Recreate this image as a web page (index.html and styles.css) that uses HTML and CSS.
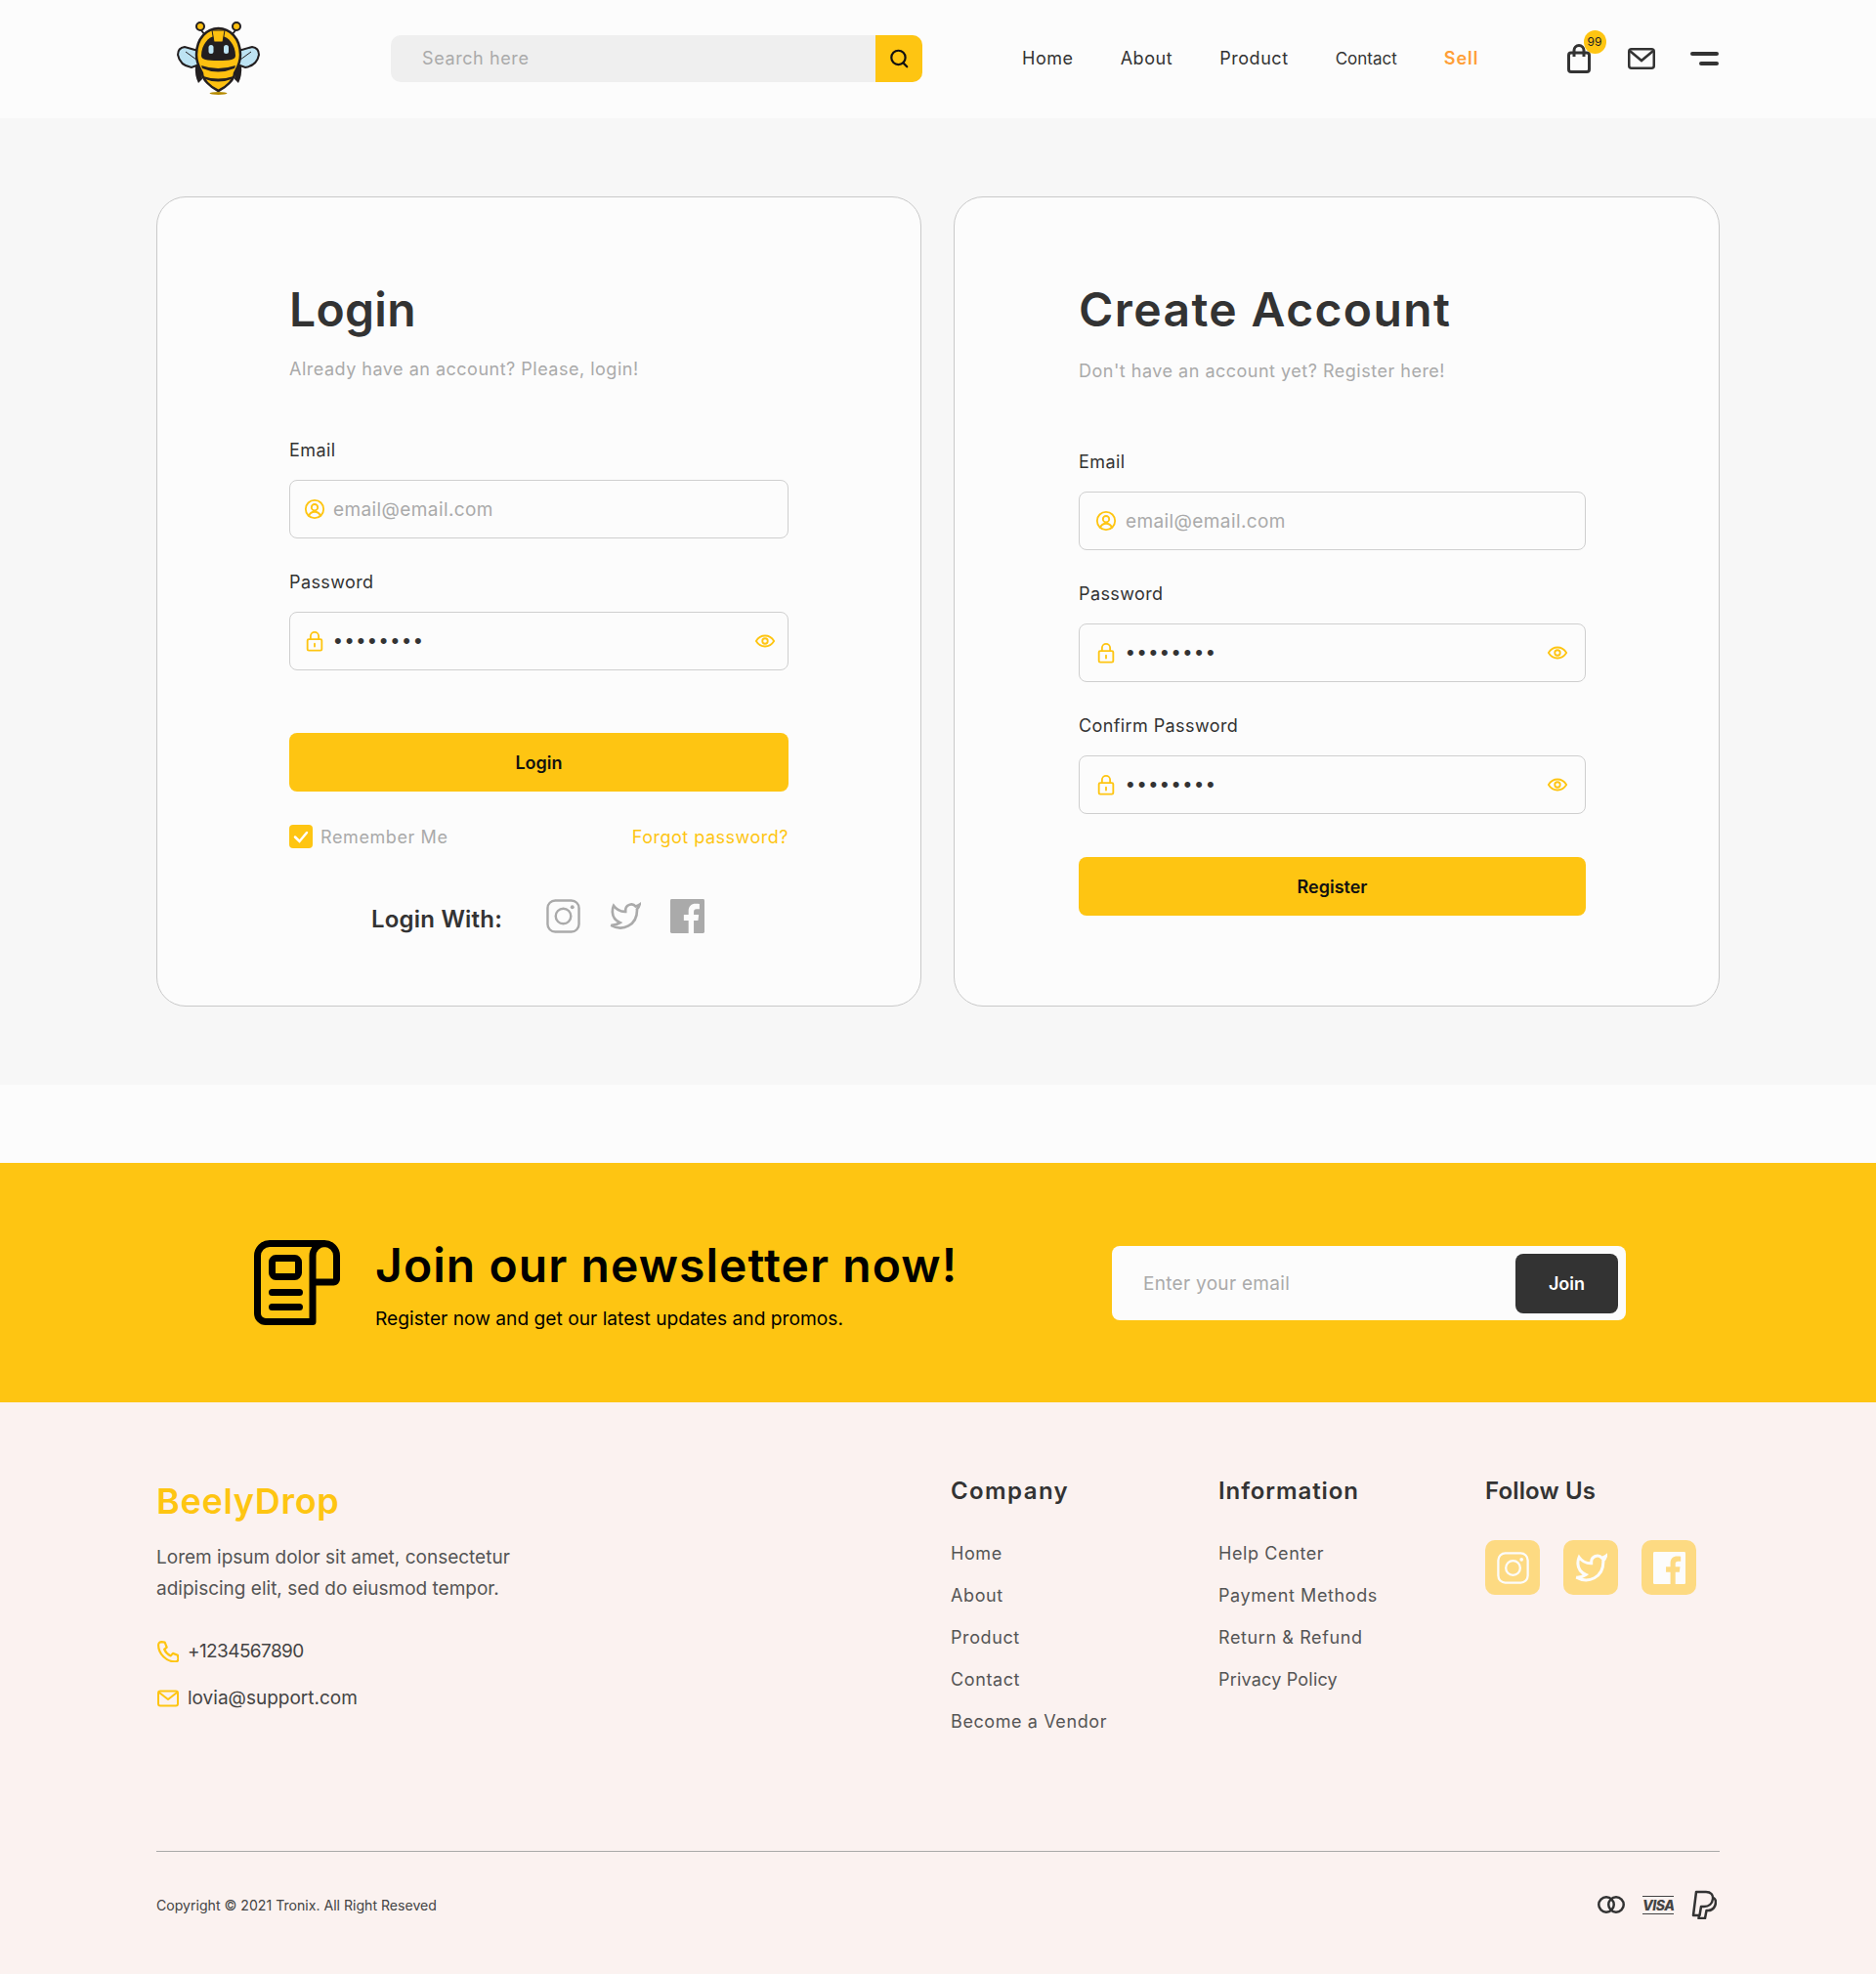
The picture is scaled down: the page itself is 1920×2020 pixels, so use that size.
FILE: index.html

```html
<!DOCTYPE html>
<html lang="en">
<head>
    <meta charset="UTF-8">
    <meta name="viewport" content="width=device-width, initial-scale=1.0">
    <title>BeelyDrop - Login</title>
    <link rel="stylesheet" href="styles.css">
</head>
<body>
    <header class="topbar">
        <svg class="logo" viewBox="0 0 110 100" aria-label="BeelyDrop">
            <path d="M44 30L36 20M63 30L71 20" stroke="#231f20" stroke-width="2" fill="none"/>
            <circle cx="35" cy="16" r="4" fill="#fdc010" stroke="#231f20" stroke-width="2"/>
            <circle cx="72" cy="16" r="4" fill="#fdc010" stroke="#231f20" stroke-width="2"/>
            <path d="M33 41L19 37Q12 38 12 45Q14 56 26 58L34 55Z" fill="#bde3f3" stroke="#231f20" stroke-width="2"/>
            <path d="M74 41L88 37Q95 38 95 45Q93 56 81 58L73 55Z" fill="#bde3f3" stroke="#231f20" stroke-width="2"/>
            <path d="M20 42L31 50M87 42L76 50" stroke="#231f20" stroke-width="1" fill="none"/>
            <path d="M30 56Q29 66 33 74L37 70L36 56ZM77 56Q78 66 74 74L70 70L71 56Z" fill="#231f20"/>
            <path d="M31 45C31 28 42 18 53.5 18C65 18 76 28 76 45C76 54 72 60 70 64C70 70 62 78 53.5 82C45 78 37 70 37 64C35 60 31 54 31 45Z" fill="#fdc010" stroke="#231f20" stroke-width="2.5"/>
            <path d="M36 46C36 34 44 27 49 26L58 26C63 27 71 34 71 46C71 50 66 51 53.5 51C41 51 36 50 36 46Z" fill="#231f20"/>
            <path d="M47 20L60 20L58 32L49 32Z" fill="#fdc010" stroke="#231f20" stroke-width="1"/>
            <rect x="43.5" y="35" width="5" height="9" rx="2.5" fill="#bde3f3"/>
            <rect x="59" y="35" width="5" height="9" rx="2.5" fill="#bde3f3"/>
            <path d="M36 56Q53 62 71 56L70 59Q53 66 37 59ZM38 67Q53 72 69 67L67 70Q53 75 40 70Z" fill="#231f20"/>
            <ellipse cx="53.5" cy="84.5" rx="9" ry="1.5" fill="#b58a00"/>
        </svg>

        <form class="search">
            <input type="text" class="search-input" placeholder="Search here">
            <button type="button" class="search-btn" aria-label="Search">
                <svg class="ico-20" viewBox="0 0 20 20"><circle cx="9.5" cy="9" r="6.5"/><path d="M14 14l3.5 3.5"/></svg>
            </button>
        </form>

        <nav class="nav">
            <a href="#">Home</a>
            <a href="#">About</a>
            <a href="#">Product</a>
            <a href="#" class="nav-small">Contact</a>
            <a href="#" class="nav-sell">Sell</a>
        </nav>

        <div class="top-icons">
            <span class="bag">
                <svg class="bag-ico" viewBox="0 0 24 30"><rect x="1.5" y="9" width="21" height="19.5" rx="2.5"/><path d="M7 13V6.500a5 5 0 0 1 10 0V13"/></svg>
                <span class="badge">99</span>
            </span>
            <svg class="mail-ico" viewBox="0 0 28 22"><rect x="1.250" y="1.250" width="25.500" height="19.500" rx="2.500"/><path d="M2 3l12 10L26 3"/></svg>
            <span class="menu-ico"><i></i><i></i></span>
        </div>
    </header>

    <main class="auth">
        <section class="card card-login">
            <h1>Login</h1>
            <p class="sub">Already have an account? Please, login!</p>

            <div class="field">
                <label>Email</label>
                <div class="input-wrap">
                    <svg class="ico" viewBox="0 0 24 24"><circle cx="12" cy="12" r="10"/><circle cx="12" cy="10" r="3.500"/><path d="M5.500 19.500c1-3 3.500-4.500 6.500-4.500s5.500 1.500 6.500 4.500"/></svg>
                    <input type="text" placeholder="email@email.com">
                </div>
            </div>
            <div class="field">
                <label>Password</label>
                <div class="input-wrap">
                    <svg class="ico" viewBox="0 0 24 24"><rect x="4" y="10" width="16" height="12.500" rx="1.500"/><path d="M7.500 10V6.500a4.500 4.500 0 0 1 9 0V10M12 15v3"/></svg>
                    <input type="password" value="12345678">
                    <svg class="ico eye" viewBox="0 0 24 24"><path d="M2 12c2.500-4 5.800-6 10-6s7.500 2 10 6c-2.500 4-5.800 6-10 6s-7.500-2-10-6z"/><circle cx="12" cy="12" r="3"/></svg>
                </div>
            </div>

            <button class="main-btn login-btn">Login</button>

            <div class="remember">
                <label class="check">
                    <span class="box"><svg viewBox="0 0 24 24"><path d="M6 12.500l4.500 4.500L18 8"/></svg></span>
                    Remember Me
                </label>
                <a href="#" class="forgot">Forgot password?</a>
            </div>

            <div class="login-with">
                <strong>Login With:</strong>
                <svg class="soc soc-line" viewBox="0 0 36 36"><rect x="1.500" y="1.500" width="33" height="33" rx="8"/><circle cx="18" cy="18" r="8"/><circle class="dot" cx="27.500" cy="8.500" r="2"/></svg>
                <svg class="soc soc-line soc-tw" viewBox="0 0 24 24"><path d="M23 3a10.900 10.900 0 0 1-3 1.530 4.480 4.480 0 0 0-7.860 3v1A10.660 10.660 0 0 1 3 4s-4 9 5 13a11.640 11.640 0 0 1-7 2c9 5 20 0 20-11.500a4.500 4.500 0 0 0-.08-.83A7.720 7.720 0 0 0 23 3z"/></svg>
                <svg class="soc soc-fb" viewBox="0 0 24 24"><rect class="fb-bg" width="24" height="24" rx="1"/><path class="fb-f" d="M16.500 24v-9h3l.5-4h-3.500V9c0-1.200.500-2 2-2H20.500V3.500c-.7-.1-1.700-.2-2.700-.2-3 0-5 1.800-5 5V11H9.500v4h3.300v9z"/></svg>
            </div>
        </section>

        <section class="card card-register">
            <h1>Create Account</h1>
            <p class="sub">Don't have an account yet? Register here!</p>

            <div class="field">
                <label>Email</label>
                <div class="input-wrap">
                    <svg class="ico" viewBox="0 0 24 24"><circle cx="12" cy="12" r="10"/><circle cx="12" cy="10" r="3.500"/><path d="M5.500 19.500c1-3 3.500-4.500 6.500-4.500s5.500 1.500 6.500 4.500"/></svg>
                    <input type="text" placeholder="email@email.com">
                </div>
            </div>
            <div class="field">
                <label>Password</label>
                <div class="input-wrap">
                    <svg class="ico" viewBox="0 0 24 24"><rect x="4" y="10" width="16" height="12.500" rx="1.500"/><path d="M7.500 10V6.500a4.500 4.500 0 0 1 9 0V10M12 15v3"/></svg>
                    <input type="password" value="12345678">
                    <svg class="ico eye" viewBox="0 0 24 24"><path d="M2 12c2.500-4 5.800-6 10-6s7.500 2 10 6c-2.500 4-5.800 6-10 6s-7.500-2-10-6z"/><circle cx="12" cy="12" r="3"/></svg>
                </div>
            </div>
            <div class="field">
                <label>Confirm Password</label>
                <div class="input-wrap">
                    <svg class="ico" viewBox="0 0 24 24"><rect x="4" y="10" width="16" height="12.500" rx="1.500"/><path d="M7.500 10V6.500a4.500 4.500 0 0 1 9 0V10M12 15v3"/></svg>
                    <input type="password" value="12345678">
                    <svg class="ico eye" viewBox="0 0 24 24"><path d="M2 12c2.500-4 5.800-6 10-6s7.500 2 10 6c-2.500 4-5.800 6-10 6s-7.500-2-10-6z"/><circle cx="12" cy="12" r="3"/></svg>
                </div>
            </div>

            <button class="main-btn register-btn">Register</button>
        </section>
    </main>

    <div class="gap-strip"></div>

    <section class="newsletter">
        <svg class="news-ico" viewBox="0 0 88 87"><path d="M60 83.500H12A8.500 8.500 0 0 1 3.500 75V16A12.500 12.500 0 0 1 16 3.500H72A12.500 12.500 0 0 1 84.500 16V40A3 3 0 0 1 81.500 43H60M60 83.500V16A12.500 12.500 0 0 1 72 3.500"/><rect x="18.500" y="18.500" width="27" height="19" rx="4"/><path d="M18.500 53.500H46.500M18.500 68.500H46.500"/></svg>
        <div class="news-text">
            <h2>Join our newsletter now!</h2>
            <p>Register now and get our latest updates and promos.</p>
        </div>
        <form class="news-form">
            <input type="text" placeholder="Enter your email">
            <button type="button">Join</button>
        </form>
    </section>

    <footer class="footer">
        <div class="footer-top">
            <div class="brand">
                <h3 class="brand-name">BeelyDrop</h3>
                <p>Lorem ipsum dolor sit amet, consectetur<br>adipiscing elit, sed do eiusmod tempor.</p>
                <div class="contact contact-phone">
                    <svg class="ico" viewBox="2 1.500 20 20"><path d="M6 2.500l3 .5 1.800 4.500-2.300 2c1.200 2.800 3.200 4.800 6 6l2-2.300 4.500 1.800.5 3c0 1.800-1.200 3-3 3C10.500 21 3 13.500 3 5.500c0-1.800 1.200-3 3-3z"/></svg>
                    <span class="phone-num">+1234567890</span>
                </div>
                <div class="contact">
                    <svg class="ico" viewBox="1 1 22 22"><rect x="2" y="4.500" width="20" height="15" rx="2"/><path d="M3 6l9 7 9-7"/></svg>
                    lovia@support.com
                </div>
            </div>
            <div class="col col-company">
                <h4>Company</h4>
                <a href="#">Home</a>
                <a href="#">About</a>
                <a href="#">Product</a>
                <a href="#">Contact</a>
                <a href="#">Become a Vendor</a>
            </div>
            <div class="col col-info">
                <h4>Information</h4>
                <a href="#">Help Center</a>
                <a href="#">Payment Methods</a>
                <a href="#">Return &amp; Refund</a>
                <a href="#" class="link-tight">Privacy Policy</a>
            </div>
            <div class="col col-follow">
                <h4>Follow Us</h4>
                <div class="follow">
                    <span class="tile"><svg class="tile-line" viewBox="0 0 36 36"><rect x="1.500" y="1.500" width="33" height="33" rx="8"/><circle cx="18" cy="18" r="8"/><circle class="dot" cx="27.500" cy="8.500" r="2"/></svg></span>
                    <span class="tile"><svg class="tile-line tile-tw" viewBox="0 0 24 24"><path d="M23 3a10.900 10.900 0 0 1-3 1.530 4.480 4.480 0 0 0-7.860 3v1A10.660 10.660 0 0 1 3 4s-4 9 5 13a11.640 11.640 0 0 1-7 2c9 5 20 0 20-11.500a4.500 4.500 0 0 0-.08-.83A7.720 7.720 0 0 0 23 3z"/></svg></span>
                    <span class="tile"><svg class="tile-fb" viewBox="0 0 24 24"><rect class="fb-bg" width="24" height="24" rx="1"/><path class="fb-f" d="M16.500 24v-9h3l.5-4h-3.500V9c0-1.200.500-2 2-2H20.500V3.500c-.7-.1-1.700-.2-2.700-.2-3 0-5 1.800-5 5V11H9.500v4h3.300v9z"/></svg></span>
                </div>
            </div>
        </div>
        <div class="footer-bottom">
            <small>Copyright © 2021 Tronix. All Right Reseved</small>
            <div class="pay">
                <svg class="pay-mc" viewBox="0 0 28 18"><circle cx="9" cy="9" r="7.750"/><circle cx="19" cy="9" r="7.750"/></svg>
                <span class="pay-visa">VISA</span>
                <svg class="pay-pp" viewBox="0 0 26 30"><path d="M5 2H15C20 2 22.500 5 22 9C21.500 14 18 17 13 17H10L8.500 26H2ZM8 26L7.500 29H14L15.500 21H17.500C22 21 25 17 25 12C25 10 24 8.500 22 7.500"/></svg>
            </div>
        </div>
    </footer>
</body>
</html>
```

FILE: styles.css

```css
:root {
    --yellow: #fec512;
    --dark: #333333;
    --grey: #aaaaaa;
    --line: #cfcfcf;
    --paper: #fcfcfc;
}

* {
    box-sizing: border-box;
}

body {
    margin: 0;
    font-family: Inter, "Open Sans", sans-serif;
    color: var(--dark);
    background: var(--paper);
}

a {
    text-decoration: none;
    color: inherit;
}

input,
button {
    font-family: inherit;
}

/* top bar */
.topbar {
    height: 121px;
    background: var(--paper);
    display: flex;
    align-items: center;
    padding: 0 161.500px 0 170px;
}

.logo {
    width: 110px;
    height: 100px;
    margin-right: 120px;
    flex: none;
}

.search {
    width: 544px;
    height: 48px;
    display: flex;
    background: #efefef;
    border-radius: 10px;
    overflow: hidden;
    margin-top: -2px;
    flex: none;
}

.search-input {
    flex: 1;
    min-width: 0;
    border: none;
    background: none;
    padding: 0 0 0 32px;
    font-size: 18px;
    letter-spacing: 0.6px;
    outline: none;
}

.search-input::placeholder,
.input-wrap input::placeholder,
.news-form input::placeholder {
    color: var(--grey);
    opacity: 1;
}

.search-btn {
    width: 48px;
    border: none;
    background: var(--yellow);
    display: flex;
    align-items: center;
    justify-content: center;
    padding: 0;
}

.ico-20 {
    width: 22px;
    height: 22px;
    fill: none;
    stroke: #111;
    stroke-width: 2;
    stroke-linecap: round;
}

.nav {
    display: flex;
    align-items: center;
    gap: 48px;
    margin-left: 102px;
    font-size: 18px;
    letter-spacing: 0.55px;
    margin-top: -2px;
}

.nav-small {
    font-size: 17px;
    letter-spacing: 0;
}

.nav-sell {
    color: #ff9f38;
    font-weight: 600;
    letter-spacing: 1px;
}

.top-icons {
    display: flex;
    align-items: center;
    margin-left: auto;
    margin-top: -2px;
}

.bag {
    position: relative;
    display: block;
    width: 24px;
    height: 30px;
    margin-right: 38px;
}

.bag-ico {
    display: block;
    width: 24px;
    height: 30px;
    fill: none;
    stroke: var(--dark);
    stroke-width: 3;
}

.badge {
    position: absolute;
    left: 17px;
    top: -14px;
    width: 23px;
    height: 24px;
    border-radius: 50%;
    background: var(--yellow);
    color: #222;
    font-size: 12px;
    text-align: center;
    line-height: 24px;
}

.mail-ico {
    width: 28px;
    height: 22px;
    fill: none;
    stroke: var(--dark);
    stroke-width: 2.500;
    margin-right: 36px;
}

.menu-ico {
    width: 29px;
    display: flex;
    flex-direction: column;
    align-items: flex-end;
    gap: 6px;
}

.menu-ico i {
    display: block;
    width: 100%;
    height: 4px;
    border-radius: 2px;
    background: var(--dark);
}

.menu-ico i + i {
    width: 66%;
}

/* login and register cards */
.auth {
    background: #f7f7f7;
    height: 989px;
    padding: 80px 160px;
    display: grid;
    grid-template-columns: 783px 784px;
    gap: 33px;
}

.card {
    background: var(--paper);
    border: 1px solid #c9c9c9;
    border-radius: 30px;
    padding-top: 85px;
}

.card-login {
    padding-left: 135px;
    padding-right: 135px;
}

.card-register {
    padding-left: 127px;
    padding-right: 136px;
}

.card h1 {
    margin: 0;
    font-size: 48px;
    line-height: 60px;
    font-weight: 600;
    letter-spacing: 0.3px;
}

.card-register h1 {
    letter-spacing: 1.4px;
}

.sub {
    margin: 16px 0 53px;
    font-size: 18px;
    line-height: 30px;
    letter-spacing: 0.5px;
    color: var(--grey);
}

.card-register .sub {
    margin: 18px 0 63px;
}

.field {
    margin-bottom: 30px;
}

.field label {
    display: block;
    font-size: 18px;
    line-height: 30px;
    letter-spacing: 0.4px;
    margin-bottom: 15px;
}

.input-wrap {
    height: 60px;
    border: 1px solid var(--line);
    border-radius: 8px;
    display: flex;
    align-items: center;
    padding: 0 12px 0 14px;
}

.card-register .input-wrap {
    padding: 0 17px 0 16px;
}

.ico {
    width: 22px;
    height: 22px;
    flex: none;
    fill: none;
    stroke: var(--yellow);
    stroke-width: 2;
    stroke-linecap: round;
    stroke-linejoin: round;
}

.input-wrap input {
    flex: 1;
    min-width: 0;
    border: none;
    background: none;
    outline: none;
    padding: 0 0 0 8px;
    font-size: 19px;
    letter-spacing: 0.4px;
    color: var(--dark);
}

.card-register .input-wrap input {
    padding-left: 9px;
}

.input-wrap input[type="password"] {
    font-family: "Liberation Sans", Arial, sans-serif;
    font-size: 22px;
    letter-spacing: 4px;
    padding-left: 9px;
}

.card-register .input-wrap input[type="password"] {
    padding-left: 10px;
}

.main-btn {
    display: block;
    width: 100%;
    height: 60px;
    border: none;
    border-radius: 8px;
    background: var(--yellow);
    color: #111;
    font-size: 18px;
    font-weight: 600;
}

.login-btn {
    margin-top: 64px;
    padding-right: 6px;
}

.register-btn {
    margin-top: 44px;
}

.remember {
    margin-top: 31px;
    height: 30px;
    display: flex;
    align-items: center;
    justify-content: space-between;
    font-size: 18px;
}

.check {
    display: flex;
    align-items: center;
    gap: 8px;
    color: var(--grey);
    letter-spacing: 0.6px;
}

.box {
    width: 24px;
    height: 24px;
    border-radius: 4px;
    background: var(--yellow);
}

.box svg {
    display: block;
    fill: none;
    stroke: #fff;
    stroke-width: 2.500;
    stroke-linecap: round;
}

.forgot {
    color: var(--yellow);
    letter-spacing: 0.5px;
}

.login-with {
    margin-top: 45px;
    height: 44px;
    display: flex;
    align-items: center;
    padding-left: 84px;
    margin-left: 0;
}

.login-with strong {
    width: 179px;
    font-size: 24px;
    font-weight: 600;
    letter-spacing: 0.2px;
    padding-top: 4px;
}

.soc {
    width: 35px;
    height: 35px;
    margin-right: 30px;
    margin-top: -2px;
}

.soc-line {
    fill: none;
    stroke: var(--grey);
    stroke-width: 2.500;
    color: var(--grey);
}

.soc-line .dot,
.tile-line .dot {
    fill: currentColor;
    stroke: none;
}

.soc-tw {
    stroke-width: 2;
    width: 32px;
}

.soc-fb .fb-bg {
    fill: var(--grey);
}

.soc-fb .fb-f {
    fill: var(--paper);
}

.gap-strip {
    height: 80px;
    background: var(--paper);
}

/* newsletter band */
.newsletter {
    height: 245px;
    background: var(--yellow);
    display: flex;
    align-items: center;
    padding: 0 256px 0 260px;
}

.news-ico {
    width: 88px;
    height: 87px;
    flex: none;
    fill: none;
    stroke: #000;
    stroke-width: 7;
    stroke-linecap: round;
    stroke-linejoin: round;
    margin-right: 36px;
}

.news-text {
    color: #000;
    padding-top: 4px;
}

.news-text h2 {
    margin: 0;
    font-size: 48px;
    line-height: 60px;
    font-weight: 600;
    letter-spacing: 1.070px;
}

.news-text p {
    margin: 9px 0 0;
    font-size: 19.200px;
    line-height: 30px;
}

.news-form {
    margin-left: auto;
    margin-top: 1px;
    width: 526px;
    height: 76px;
    background: var(--paper);
    border-radius: 8px;
    display: flex;
    align-items: center;
    padding: 0 8px 0 30px;
    flex: none;
}

.news-form input {
    flex: 1;
    min-width: 0;
    border: none;
    background: none;
    outline: none;
    font-size: 19px;
    letter-spacing: 0.3px;
}

.news-form button {
    width: 105px;
    height: 61px;
    border: none;
    border-radius: 8px;
    background: var(--dark);
    color: #fff;
    font-size: 18px;
    font-weight: 600;
}

/* footer */
.footer {
    background: #fbf2f0;
    padding: 0 160px 17px;
}

.footer-top {
    height: 460px;
    padding-top: 73px;
    display: flex;
    align-items: flex-start;
    border-bottom: 1px solid #a9a9a9;
}

.brand {
    width: 813px;
}

.brand-name {
    margin: 3px 0 17px;
    color: var(--yellow);
    font-size: 36px;
    line-height: 50px;
    font-weight: 600;
    letter-spacing: 0.7px;
}

.brand p {
    margin: 0 0 33px;
    font-size: 19px;
    line-height: 32px;
    color: #555;
}

.contact {
    display: flex;
    align-items: center;
    gap: 9px;
    font-size: 19px;
    line-height: 30px;
    color: #444;
}

.contact .ico {
    margin-left: 1px;
}

.contact-phone {
    margin-bottom: 18px;
}

.phone-num {
    letter-spacing: -0.6px;
}

.col-company {
    width: 274px;
}

.col-info {
    width: 273px;
}

.col h4 {
    margin: 0 0 24px;
    font-size: 24px;
    line-height: 36px;
    font-weight: 600;
    letter-spacing: 0.9px;
}

.col-company h4 {
    letter-spacing: 1.4px;
}

.col-follow h4 {
    letter-spacing: 0.15px;
}

.col a {
    display: block;
    font-size: 18px;
    line-height: 43px;
    letter-spacing: 0.6px;
    color: #555;
}

.col a.link-tight {
    letter-spacing: 0.2px;
}

.follow {
    display: flex;
    gap: 24px;
    margin-top: 32px;
}

.tile {
    width: 56px;
    height: 56px;
    border-radius: 10px;
    background: #fdda82;
    display: flex;
    align-items: center;
    justify-content: center;
}

.tile svg {
    width: 33px;
    height: 33px;
}

.tile-line {
    fill: none;
    stroke: var(--paper);
    stroke-width: 2.500;
    color: var(--paper);
}

.tile-tw {
    stroke-width: 2.200;
}

.tile-fb .fb-bg {
    fill: var(--paper);
}

.tile-fb .fb-f {
    fill: #fdda82;
}

.footer-bottom {
    height: 108px;
    display: flex;
    align-items: center;
    justify-content: space-between;
}

.footer-bottom small {
    font-size: 14.100px;
    color: #444;
}

.pay {
    display: flex;
    align-items: center;
    gap: 18px;
    padding-right: 3px;
}

.pay-mc {
    width: 28px;
    height: 18px;
    fill: none;
    stroke: var(--dark);
    stroke-width: 2.500;
}

.pay-visa {
    width: 32px;
    font-size: 14px;
    line-height: 17px;
    font-weight: 800;
    font-style: italic;
    color: #444;
    border-top: 1px solid #444;
    border-bottom: 1px solid #444;
    text-align: center;
    letter-spacing: -0.500px;
}

.pay-pp {
    width: 26px;
    height: 30px;
    fill: none;
    stroke: var(--dark);
    stroke-width: 2.500;
    stroke-linejoin: round;
}
```
